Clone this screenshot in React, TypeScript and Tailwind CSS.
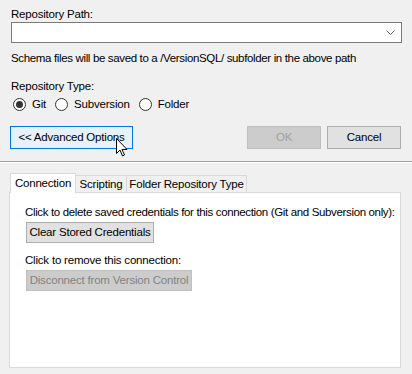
import React from "react";

const Radio = ({ checked, label }: { checked?: boolean; label: string }) => (
  <label className="flex items-center gap-[6px]">
    <span className="w-[13px] h-[13px] rounded-full border border-[#333333] bg-white flex items-center justify-center">
      {checked && <span className="w-[7px] h-[7px] rounded-full bg-[#333333]" />}
    </span>
    <span>{label}</span>
  </label>
);

const App = () => {
  return (
    <div
      className="w-[412px] h-[374px] bg-[#f0f0f0] text-[11.5px] tracking-[-0.2px] leading-[15px] text-black overflow-hidden relative whitespace-nowrap"
      style={{ fontFamily: '"Liberation Sans", Arial, sans-serif' }}
    >
      <div className="pl-[11px] pr-[10px] pt-[7px]">
        <div>Repository Path:</div>
        <div className="h-[21px] w-[391px] border border-[#7a7a7a] bg-white flex items-center justify-end pr-[6px]">
          <svg width="9" height="6" viewBox="0 0 9 6">
            <path d="M0.5 0.5 L4.5 4.5 L8.5 0.5" fill="none" stroke="#606060" strokeWidth="1" />
          </svg>
        </div>
        <div className="mt-[8px] tracking-[-0.35px]">
          Schema files will be saved to a /VersionSQL/ subfolder in the above path
        </div>
        <div className="mt-[13px]">Repository Type:</div>
        <div className="mt-[3px] ml-[2px] flex items-center gap-[9px] h-[15px]">
          <Radio checked label="Git" />
          <Radio label="Subversion" />
          <Radio label="Folder" />
        </div>
      </div>

      <div className="mt-[14px] flex items-center pl-[10px]">
        <button className="w-[123px] h-[23px] border border-[#0078d7] bg-[#e5f1fb] text-black">
          &lt;&lt; Advanced Options
        </button>
        <button className="ml-[114px] w-[74px] h-[23px] border border-[#bfbfbf] bg-[#cccccc] text-[#a0a0a0]">
          OK
        </button>
        <button className="ml-[6px] w-[74px] h-[23px] border border-[#adadad] bg-[#e1e1e1] text-black">
          Cancel
        </button>
      </div>

      <div className="mt-[12px] border-t border-[#a0a0a0] border-b border-b-white" />

      <div className="pl-[9px] pt-[9px]">
        <div className="flex items-end h-[20px] pl-[1px]">
          <div className="w-[66px] h-[20px] bg-white border border-b-0 border-[#d9d9d9] flex items-center justify-center relative z-10 -mb-[1px]">
            Connection
          </div>
          <div className="w-[51px] h-[17px] bg-[#f0f0f0] border border-l-0 border-b-0 border-[#d9d9d9] flex items-center justify-center">
            Scripting
          </div>
          <div className="w-[120px] h-[17px] bg-[#f0f0f0] border border-l-0 border-b-0 border-[#d9d9d9] flex items-center justify-center">
            Folder Repository Type
          </div>
        </div>
        <div className="w-[392px] h-[176px] bg-white border border-[#d9d9d9] pl-[15px] pt-[12px]">
          <div className="tracking-[-0.35px]">
            Click to delete saved credentials for this connection (Git and Subversion only):
          </div>
          <button className="mt-[2px] ml-[1px] h-[21px] w-[128px] border border-[#adadad] bg-[#e1e1e1] text-black">
            Clear Stored Credentials
          </button>
          <div className="mt-[10px]">Click to remove this connection:</div>
          <button className="mt-[2px] ml-[1px] h-[21px] w-[166px] border border-[#bfbfbf] bg-[#cccccc] text-[#838383]">
            Disconnect from Version Control
          </button>
        </div>
      </div>

      <svg
        className="absolute left-[116px] top-[138px]"
        width="13"
        height="20"
        viewBox="0 0 13 20"
      >
        <path
          d="M0.5 0.5 L0.5 15.5 L4 12 L6.5 18 L8.5 17 L6 11.5 L11 11.5 Z"
          fill="white"
          stroke="black"
          strokeWidth="1"
          strokeLinejoin="round"
        />
      </svg>
    </div>
  );
};

export default App;
